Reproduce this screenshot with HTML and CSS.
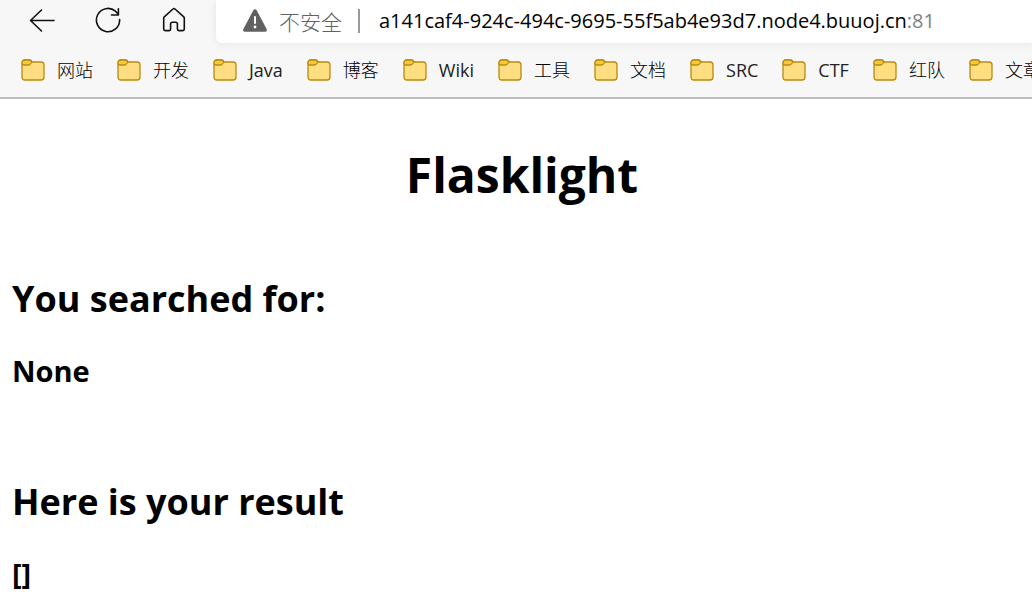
FILE: index.html
```html
<!DOCTYPE html>
<html lang="zh-CN">
<head>
<meta charset="utf-8">
<title>Flasklight</title>
<link rel="stylesheet" href="styles.css">
</head>
<body>
<svg class="sprite" aria-hidden="true">
  <symbol id="folder" viewBox="0 0 24 22">
    <path d="M1 4.5Q1 1 4 1H8.5Q10 1 11.2 3H20Q23 3 23 6V18Q23 21 20 21H4Q1 21 1 18Z" fill="#ffde82" stroke="#b98a10" stroke-width="1.3"/>
    <path d="M1 4Q1 1 4 1H8Q9.5 1 11 3Q9 6 7.5 6H3Q1 6 1 4Z" fill="#fcc934" stroke="#b98a10" stroke-width="1.3" stroke-linejoin="round"/>
  </symbol>
</svg>
<header class="browser">
  <div class="toolbar">
    <nav class="controls">
      <button class="control" type="button" aria-label="返回"><svg class="control-icon" viewBox="0 0 26 26"><path d="M25 13.5H1.5M12.5 3L1.5 13.5L12.5 24"/></svg></button>
      <button class="control" type="button" aria-label="刷新"><svg class="control-icon" viewBox="0 0 26 26"><path d="M24.6 12.5A11.6 11.6 0 1 1 20.5 4.2L23.4 7.3M23.4 1.8V8H16.5"/></svg></button>
      <button class="control" type="button" aria-label="主页"><svg class="control-icon" viewBox="0 0 26 26"><path d="M2.7 11.2Q2.7 10.3 3.5 9.6L12 2Q13 1.2 14 2L22.5 9.6Q23.3 10.3 23.3 11.2V22Q23.3 23.6 21.7 23.6H17.8Q16.4 23.6 16.4 22V17Q16.4 15.3 14.7 15.3H11.3Q9.6 15.3 9.6 17V22Q9.6 23.6 8.2 23.6H4.3Q2.7 23.6 2.7 22Z"/></svg></button>
    </nav>
    <div class="address">
      <svg class="warning" viewBox="0 0 24 23"><path d="M10.2 1.4Q12 -0.8 13.8 1.4L23.6 20Q24.4 22.6 22 22.8H2Q-0.4 22.6 0.4 20Z" fill="#616161"/><path d="M12 8V14" stroke="#fff" stroke-width="2" stroke-linecap="round"/><circle cx="12" cy="18" r="1.4" fill="#fff"/></svg>
      <span class="security">不安全</span>
      <span class="divider"></span>
      <span class="url">a141caf4-924c-494c-9695-55f5ab4e93d7.node4.buuoj.cn<span class="port">:81</span></span>
    </div>
  </div>
  <nav class="bookmarks">
    <button class="bookmark" type="button"><svg class="folder"><use href="#folder"/></svg>网站</button>
    <button class="bookmark" type="button"><svg class="folder"><use href="#folder"/></svg>开发</button>
    <button class="bookmark latin" type="button"><svg class="folder"><use href="#folder"/></svg>Java</button>
    <button class="bookmark" type="button"><svg class="folder"><use href="#folder"/></svg>博客</button>
    <button class="bookmark latin" type="button"><svg class="folder"><use href="#folder"/></svg>Wiki</button>
    <button class="bookmark" type="button"><svg class="folder"><use href="#folder"/></svg>工具</button>
    <button class="bookmark" type="button"><svg class="folder"><use href="#folder"/></svg>文档</button>
    <button class="bookmark latin" type="button"><svg class="folder"><use href="#folder"/></svg>SRC</button>
    <button class="bookmark latin" type="button"><svg class="folder"><use href="#folder"/></svg>CTF</button>
    <button class="bookmark" type="button"><svg class="folder"><use href="#folder"/></svg>红队</button>
    <button class="bookmark" type="button"><svg class="folder"><use href="#folder"/></svg>文章</button>
  </nav>
</header>
<main class="page">
  <h1 class="title">Flasklight</h1>
  <section class="block">
    <h2 class="heading">You searched for:</h2>
    <h3 class="value">None</h3>
  </section>
  <section class="block">
    <h2 class="heading">Here is your result</h2>
    <h3 class="value">[]</h3>
  </section>
</main>
</body>
</html>
```
FILE: styles.css
```css
* { box-sizing: border-box; }
body {
  margin: 0;
  background: #fff;
  color: #000;
  font-family: "Open Sans", "Noto Sans CJK SC", sans-serif;
}
.sprite { display: none; }
.browser {
  background: #f7f7f7;
  border-bottom: 2px solid #bdbdbd;
  overflow: hidden;
}
.toolbar { display: flex; align-items: flex-start; }
.controls {
  display: flex;
  flex: none;
  gap: 40px;
  padding: 7px 28px 0 29px;
  margin-right: 1px;
}
.control {
  display: flex;
  padding: 0;
  border: 0;
  background: none;
}
.control-icon {
  width: 26px;
  height: 26px;
  fill: none;
  stroke: #111;
  stroke-width: 1.6;
  stroke-linecap: round;
  stroke-linejoin: round;
}
.address {
  display: flex;
  flex: 1;
  align-items: center;
  height: 43px;
  padding: 0 0 2px 27px;
  border-radius: 0 0 0 6px;
  background: #fff;
  box-shadow: 0 1px 8px rgba(0, 0, 0, 0.08);
  white-space: nowrap;
}
.warning { width: 24px; height: 23px; flex: none; }
.security { margin-left: 12px; color: #616161; font-size: 21px; font-weight: 300; }
.divider { width: 2px; height: 24px; margin: 0 19px 0 16px; background: #999; }
.url { font-size: 20px; }
.port { color: #808080; }
.bookmarks {
  display: flex;
  gap: 24px;
  padding: 12px 0 12px 21px;
}
.bookmark {
  display: flex;
  flex: none;
  align-items: center;
  gap: 12px;
  padding: 0;
  border: 0;
  background: none;
  color: #000;
  font: 300 18px/30px "Open Sans", "Noto Sans CJK SC", sans-serif;
}
.latin { color: #222; font-weight: 400; }
.folder { width: 24px; height: 22px; }
.page { padding: 38px 12px 0; }
.title {
  margin: 0 0 58px;
  padding-left: 12px;
  font-size: 48px;
  line-height: 76px;
  text-align: center;
}
.block + .block { margin-top: 79px; }
.heading { margin: 0 0 20px; font-size: 36px; line-height: 56px; }
.value { margin: 0; font-size: 29px; line-height: 48px; }
```
